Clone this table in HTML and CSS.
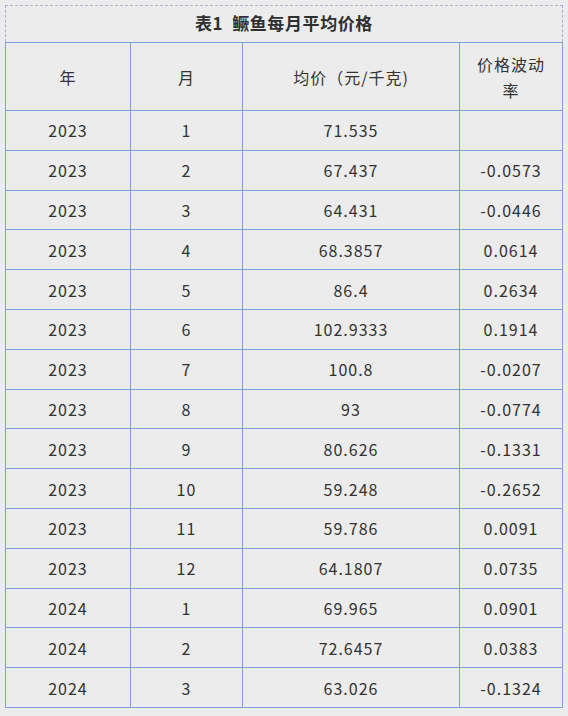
FILE: index.html
```html
<!DOCTYPE html>
<html lang="zh">
<head>
<meta charset="utf-8">
<link rel="stylesheet" href="styles.css">
</head>
<body>
<div class="wrap">
  <div class="caption">表1&nbsp;&nbsp;鳜鱼每月平均价格</div>
  <table class="price">
    <colgroup>
      <col class="c1"><col class="c2"><col class="c3"><col class="c4">
    </colgroup>
    <thead>
      <tr class="head"><th>年</th><th>月</th><th>均价（元/千克)</th><th>价格波动<br>率</th></tr>
    </thead>
    <tbody>
      <tr><td>2023</td><td>1</td><td>71.535</td><td></td></tr>
      <tr><td>2023</td><td>2</td><td>67.437</td><td>-0.0573</td></tr>
      <tr><td>2023</td><td>3</td><td>64.431</td><td>-0.0446</td></tr>
      <tr><td>2023</td><td>4</td><td>68.3857</td><td>0.0614</td></tr>
      <tr><td>2023</td><td>5</td><td>86.4</td><td>0.2634</td></tr>
      <tr><td>2023</td><td>6</td><td>102.9333</td><td>0.1914</td></tr>
      <tr><td>2023</td><td>7</td><td>100.8</td><td>-0.0207</td></tr>
      <tr><td>2023</td><td>8</td><td>93</td><td>-0.0774</td></tr>
      <tr><td>2023</td><td>9</td><td>80.626</td><td>-0.1331</td></tr>
      <tr><td>2023</td><td>10</td><td>59.248</td><td>-0.2652</td></tr>
      <tr><td>2023</td><td>11</td><td>59.786</td><td>0.0091</td></tr>
      <tr><td>2023</td><td>12</td><td>64.1807</td><td>0.0735</td></tr>
      <tr><td>2024</td><td>1</td><td>69.965</td><td>0.0901</td></tr>
      <tr><td>2024</td><td>2</td><td>72.6457</td><td>0.0383</td></tr>
      <tr><td>2024</td><td>3</td><td>63.026</td><td>-0.1324</td></tr>
    </tbody>
  </table>
</div>
</body>
</html>
```
FILE: styles.css
```css
html, body {
  margin: 0;
  padding: 0;
  background: #ececec;
}
body {
  padding: 5px 0 0 5px;
  font-family: "Noto Sans CJK SC", "Noto Sans", sans-serif;
  color: #333333;
}
.wrap {
  width: 558px;
}
.caption {
  box-sizing: border-box;
  height: 37px;
  border: 1px dashed #a9b4c8;
  border-bottom: none;
  text-align: center;
  font-size: 17px;
  font-weight: bold;
  letter-spacing: 0.6px;
  line-height: 34px;
  color: #2f2f2f;
}
.price {
  width: 558px;
  border-collapse: collapse;
  table-layout: fixed;
  font-size: 16px;
  letter-spacing: 1px;
}
.c1 { width: 125px; }
.c2 { width: 112px; }
.c3 { width: 217px; }
.c4 { width: 103px; }
.price th, .price td {
  border: 1px solid #7f9fd6;
  text-align: center;
  padding: 0;
  font-weight: normal;
}
.price th {
  height: 67px;
  line-height: 26px;
}
.price td {
  height: 38.8px;
  line-height: 20px;
}
```
